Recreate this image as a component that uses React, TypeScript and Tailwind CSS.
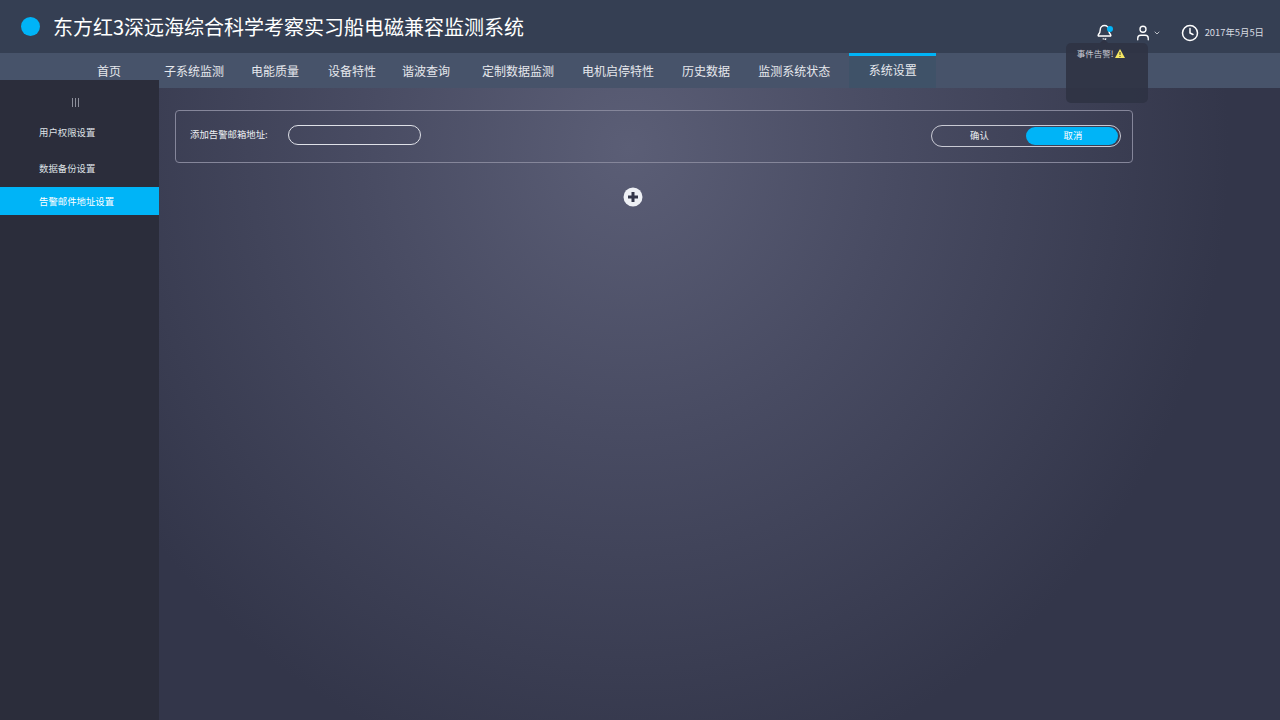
import { Bell, ChevronDown, Clock, User } from "lucide-react";

const NAV = [
  { label: "首页", className: "ml-[97px]" },
  { label: "子系统监测", className: "ml-[43px]" },
  { label: "电能质量", className: "ml-[27px]" },
  { label: "设备特性", className: "ml-[29px]" },
  { label: "谐波查询", className: "ml-[26px]" },
  { label: "定制数据监测", className: "ml-[32px]" },
  { label: "电机启停特性", className: "ml-[28px]" },
  { label: "历史数据", className: "ml-[28px]" },
  { label: "监测系统状态", className: "ml-[28px]" },
];

const FONT = "font-['Noto_Sans_CJK_SC','Noto_Sans',sans-serif]";

function Header() {
  return (
    <header className="relative z-20 flex h-[53px] items-center bg-[#353f53] pl-[21px] pr-[16px]">
      <span className="h-[19px] w-[19px] rounded-full bg-[#00b4f7]" />
      <h1 className="ml-[13px] text-[20px] leading-none text-white">
        东方红3深远海综合科学考察实习船电磁兼容监测系统
      </h1>

      <div className="ml-auto flex translate-y-[6px] items-center text-white">
        <div className="relative h-[17px] w-[17px]">
          <Bell size={17} strokeWidth={2} />
          <span className="absolute right-[0px] top-[2px] h-[6px] w-[6px] rounded-full bg-[#00b4f7]" />
          <AlertTip />
        </div>
        <User size={18} strokeWidth={1.8} className="ml-[21px]" />
        <ChevronDown size={8} strokeWidth={2} className="ml-[1px]" />
        <Clock size={18} strokeWidth={2} className="ml-[20px]" />
        <span className="ml-[6px] text-[9.4px] text-[#d8dbe2]">2017年5月5日</span>
      </div>
    </header>
  );
}

function AlertTip() {
  return (
    <div className="absolute left-[-30px] top-[19px] h-[60px] w-[82px] rounded-[5px] bg-[#2f3344]/90 px-[11px] pt-[4px]">
      <span className="absolute left-[34px] top-[-4px] h-0 w-0 border-x-[4px] border-b-[4px] border-x-transparent border-b-[#2f3344]" />
      <div className="flex items-center gap-[2px] text-[8.5px] leading-[12px] text-[#c9ccd4]">
        事件告警!
        <svg width="10" height="9" viewBox="0 0 10 9">
          <path d="M5 0 10 9H0Z" fill="#f5e663" />
          <path d="M5 3v3M5 7v1" stroke="#3a3a30" strokeWidth="1" />
        </svg>
      </div>
    </div>
  );
}

function TopNav() {
  return (
    <nav className="relative z-0 flex h-[35px] bg-[#47536a] text-[12px] text-[#e6e8ed]">
      {NAV.map((item) => (
        <a key={item.label} className={`${item.className} flex h-[27px] translate-y-[4px] items-center`}>
          {item.label}
        </a>
      ))}
      <a className="ml-[19px] flex w-[87px] items-center justify-center border-t-[3px] border-[#00b4f7] bg-[#3f5268] pb-[5px]">
        系统设置
      </a>
    </nav>
  );
}

function Sidebar() {
  return (
    <aside className="relative z-10 -mt-[8px] flex w-[159px] shrink-0 flex-col bg-[#2b2d3b] text-[9.4px] text-[#dfe1e6]">
      <div className="ml-[72px] mt-[18px] flex h-[9px] gap-[2px]">
        <span className="w-px bg-[#8d8f9b]" />
        <span className="w-px bg-[#8d8f9b]" />
        <span className="w-px bg-[#8d8f9b]" />
      </div>
      <a className="mt-[17px] pl-[39px] leading-[16px]">用户权限设置</a>
      <a className="mt-[20px] pl-[39px] leading-[16px]">数据备份设置</a>
      <a className="mt-[11px] flex h-[28px] items-center bg-[#00b4f7] pl-[39px] text-white">
        告警邮件地址设置
      </a>
    </aside>
  );
}

function EmailPanel() {
  return (
    <section className="ml-[16px] mt-[22px] flex h-[53px] w-[958px] items-center rounded-[4px] border border-[#85869a] pb-[4px] pl-[14px] pr-[11px] text-[9.4px] text-[#eceef2]">
      <label className="w-[98px]">添加告警邮箱地址:</label>
      <input className="h-[20px] w-[133px] rounded-full border border-[#dfe1e8] bg-transparent outline-none" />
      <div className="ml-auto mt-[2px] flex h-[22px] w-[190px] items-center rounded-full border border-[#c9cad4] py-[1px] pl-[1px] pr-[2px]">
        <button className="flex-1 text-center">确认</button>
        <button className="h-[18px] w-[92px] rounded-full bg-[#00b4f7] pl-[2px] text-white">取消</button>
      </div>
    </section>
  );
}

export default function App() {
  return (
    <div className={`${FONT} flex h-[720px] w-[1280px] flex-col overflow-hidden bg-[#343746]`}>
      <Header />
      <TopNav />
      <div className="flex min-h-0 flex-1">
        <Sidebar />
        <main className="flex-1 bg-[radial-gradient(ellipse_600px_640px_at_470px_60px,#5b5e76_0%,#484b62_45%,#33364a_100%)]">
          <EmailPanel />
          <button className="ml-[464px] mt-[24px] block h-[20px] w-[20px]">
            <svg width="20" height="20" viewBox="0 0 20 20">
              <circle cx="10" cy="10" r="9.5" fill="#eef0f5" />
              <path d="M10 5v10M5 10h10" stroke="#33364a" strokeWidth="3" />
            </svg>
          </button>
        </main>
      </div>
    </div>
  );
}
